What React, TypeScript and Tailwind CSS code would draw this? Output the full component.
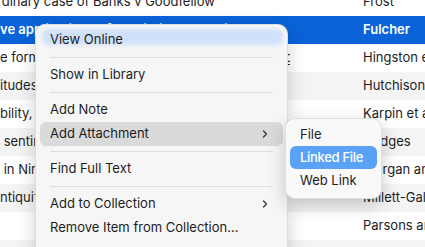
import { ChevronRight } from 'lucide-react'

type Row = { title: string; creator: string }

const rows: Row[] = [
    { title: 'rdinary case of Banks v Goodfellow', creator: 'Frost' },
    { title: 've applications of predictive genomics', creator: 'Fulcher' },
    { title: 'e formation of capacity in dementia law and regulation', creator: 'Hingston et al.' },
    { title: 'itudes towards testamentary capacity', creator: 'Hutchison' },
    { title: 'bility, and the law of wills', creator: 'Karpin et al.' },
    { title: ' sentiment and undue influence', creator: 'Hedges' },
    { title: ' in Nineteenth-Century England', creator: 'Morgan and Lee' },
    { title: 'ntiquity to the present', creator: 'Millett-Gallant' },
    { title: '', creator: 'Parsons and Green' },
    { title: '', creator: '' },
]

const font = { fontFamily: 'Inter, "Liberation Sans", sans-serif' }

function MenuItem({ label, active, sub }: { label: string; active?: boolean; sub?: boolean }) {
    return (
        <div
            className={`relative flex h-[24px] items-center justify-between whitespace-nowrap rounded-[6px] pl-[10px] pr-[12px] ${
                active ? 'bg-[#dadada]' : ''
            }`}
        >
            <span>{label}</span>
            {sub && <ChevronRight size={12} strokeWidth={2.6} className="text-[#333]" />}
        </div>
    )
}

function Separator() {
    return (
        <div className="flex h-[11px] items-center px-[10px]">
            <div className="h-px w-full bg-[#dedede]" />
        </div>
    )
}

export default function App() {
    return (
        <div
            className="relative h-[247px] w-[425px] overflow-hidden bg-white text-[13px] text-[#1d1d1f]"
            style={font}
        >
            {/* table behind the context menu */}
            <div className="mt-[-12px] flex flex-col">
                {rows.map((row, i) => {
                    const selected = i === 1
                    const stripe = i % 2 === 1 ? 'bg-[#f4f4f5]' : 'bg-white'
                    return (
                        <div
                            key={i}
                            className={`grid h-[28px] grid-cols-[353px_1fr] items-center ${
                                selected ? 'bg-[#0a63d8] font-semibold text-white' : stripe
                            }`}
                        >
                            <div className="max-w-[290px] overflow-hidden whitespace-pre">
                                <span className={i === 0 ? 'ml-[-3px]' : ''}>{row.title}</span>
                            </div>
                            <div className="overflow-hidden whitespace-nowrap pl-[10px]">{row.creator}</div>
                        </div>
                    )
                })}
            </div>

            {/* context menu */}
            <div className="absolute left-[35px] top-[24px] h-[240px] w-[253px] overflow-hidden rounded-[10px] border border-black/10 bg-[#f6f6f6] px-[4px] pt-[3px] shadow-[0_6px_20px_rgba(0,0,0,0.18)]">
                {/* selected row glowing through the vibrant material */}
                <div className="absolute left-[6px] right-[4px] top-[4px] h-[16px] rounded-[6px] bg-[#cfe0fa] blur-[2px]" />
                <MenuItem label="View Online" />
                <Separator />
                <MenuItem label="Show in Library" />
                <Separator />
                <MenuItem label="Add Note" />
                <MenuItem label="Add Attachment" active sub />
                <Separator />
                <MenuItem label="Find Full Text" />
                <Separator />
                <MenuItem label="Add to Collection" sub />
                <MenuItem label="Remove Item from Collection…" />
            </div>

            {/* submenu */}
            <div className="absolute left-[285px] top-[118px] w-[97px] rounded-[10px] border border-black/10 bg-[#f9f9f9] px-[4px] pb-[6px] pt-[4px] shadow-[0_6px_18px_rgba(0,0,0,0.2)]">
                <div className="flex h-[23px] items-center px-[10px]">File</div>
                <div className="flex h-[23px] items-center whitespace-nowrap rounded-[6px] bg-[#5aa2f6] px-[10px] font-medium tracking-[-0.3px] text-white">
                    Linked File
                </div>
                <div className="flex h-[23px] items-center px-[10px]">Web Link</div>
            </div>
        </div>
    )
}
